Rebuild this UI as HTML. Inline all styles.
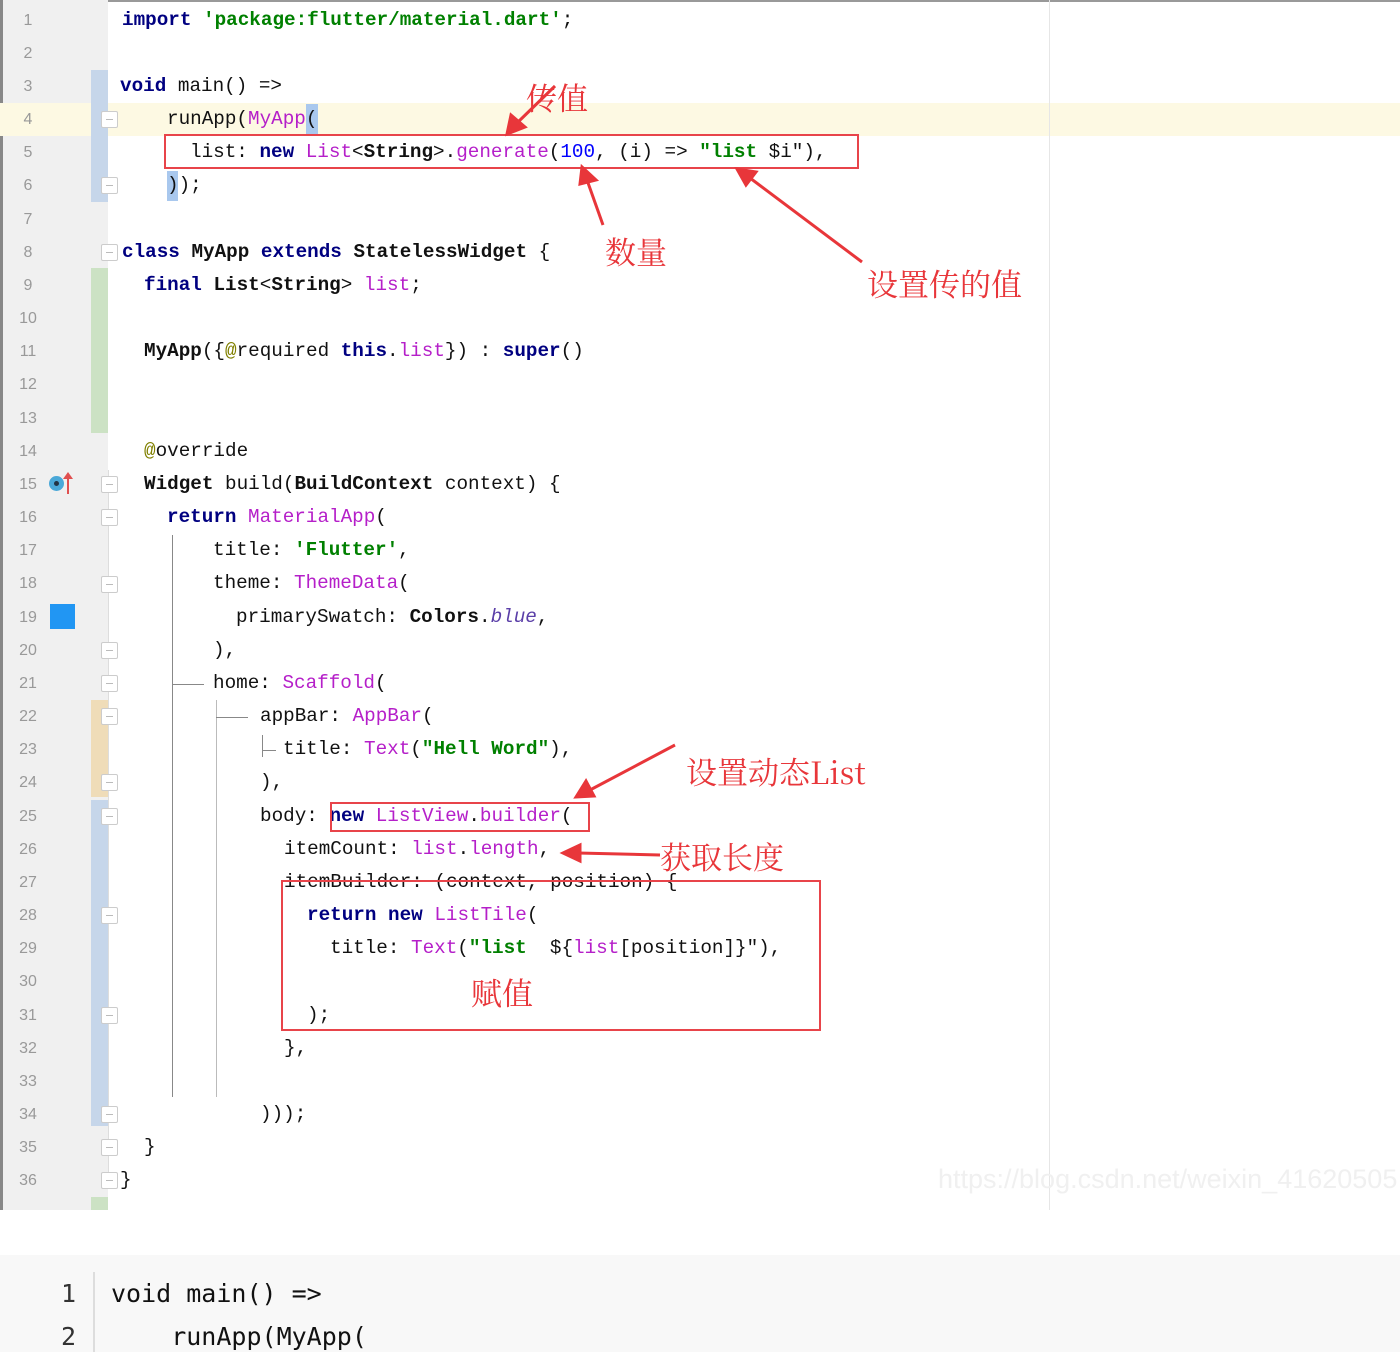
<!DOCTYPE html>
<html><head><meta charset="utf-8"><style>
*{margin:0;padding:0;box-sizing:border-box}
body{width:1400px;height:1352px;background:#fff;position:relative;overflow:hidden;font-family:"Liberation Mono",monospace}
.a{position:absolute}
.ln{position:absolute;left:10px;width:36px;text-align:center;font-family:"Liberation Sans",sans-serif;font-size:16px;color:#999;height:33px;line-height:33px}
.l{position:absolute;font-size:19.3px;height:33px;line-height:33px;white-space:pre;color:#111}
.k{color:#000080;font-weight:bold}
.s{color:#008000;font-weight:bold}
.c{color:#b51fc9}
.n{color:#0000ff}
.b{font-weight:bold}
.i{color:#5b3fa8;font-style:italic}
.r{color:#e8363a;font-family:"Noto Serif CJK SC","Noto Sans CJK SC",serif;font-size:31px;position:absolute;white-space:nowrap}
.box{position:absolute;border:2px solid #e8444a}
.f{position:absolute;left:101px;width:17px;height:17px;border:1px solid #ccc;background:#fff;border-radius:2px}
.f::after{content:"";position:absolute;left:4px;top:7px;width:7px;height:1px;background:#bbb}
</style></head><body>
<div class="a" style="left:0;top:0;width:1400px;height:1210px;border-top:2px solid #999"></div>
<div class="a" style="left:0;top:0;width:108px;height:1210px;background:#f0f0f0;border-left:3px solid #888"></div>
<div class="a" style="left:0;top:103px;width:1400px;height:33px;background:#fdf9e3"></div>
<div class="a" style="left:1049px;top:0;width:1px;height:1210px;background:#e6e6e6"></div>
<div class="a" style="left:91px;top:70px;width:17px;height:132px;background:#c6d6ea"></div>
<div class="a" style="left:91px;top:268px;width:17px;height:165px;background:#cce2c4"></div>
<div class="a" style="left:91px;top:700px;width:17px;height:97px;background:#efdcb8"></div>
<div class="a" style="left:91px;top:800px;width:17px;height:326px;background:#c6d6ea"></div>
<div class="a" style="left:91px;top:1197px;width:17px;height:13px;background:#cce2c4"></div>
<div class="a" style="left:108px;top:470px;width:1px;height:710px;background:#ddd"></div>
<div class="f" style="top:111px"></div><div class="f" style="top:177px"></div><div class="f" style="top:244px"></div>
<div class="f" style="top:476px"></div><div class="f" style="top:509px"></div><div class="f" style="top:576px"></div>
<div class="f" style="top:642px"></div><div class="f" style="top:675px"></div><div class="f" style="top:708px"></div>
<div class="f" style="top:774px"></div><div class="f" style="top:808px"></div><div class="f" style="top:907px"></div>
<div class="f" style="top:1007px"></div><div class="f" style="top:1106px"></div><div class="f" style="top:1139px"></div><div class="f" style="top:1172px"></div>
<div class="a" style="left:49px;top:476px;width:15px;height:15px;border-radius:50%;background:#4aa8d8"></div>
<div class="a" style="left:54px;top:481px;width:5px;height:5px;border-radius:50%;background:#234"></div>
<div class="a" style="left:67px;top:476px;width:2px;height:18px;background:#e05050"></div>
<div class="a" style="left:63px;top:472px;width:0;height:0;border-left:5px solid transparent;border-right:5px solid transparent;border-bottom:7px solid #e05050"></div>
<div class="a" style="left:50px;top:604px;width:25px;height:25px;background:#2196f3"></div>
<div class="ln" style="top:3.5px">1</div><div class="ln" style="top:36.7px">2</div><div class="ln" style="top:69.8px">3</div><div class="ln" style="top:103px">4</div><div class="ln" style="top:136.2px">5</div><div class="ln" style="top:169.3px">6</div><div class="ln" style="top:202.5px">7</div><div class="ln" style="top:235.7px">8</div><div class="ln" style="top:268.8px">9</div><div class="ln" style="top:302px">10</div><div class="ln" style="top:335.2px">11</div><div class="ln" style="top:368.4px">12</div><div class="ln" style="top:401.5px">13</div><div class="ln" style="top:434.7px">14</div><div class="ln" style="top:467.9px">15</div><div class="ln" style="top:501px">16</div><div class="ln" style="top:534.2px">17</div><div class="ln" style="top:567.4px">18</div><div class="ln" style="top:600.5px">19</div><div class="ln" style="top:633.7px">20</div><div class="ln" style="top:666.9px">21</div><div class="ln" style="top:700px">22</div><div class="ln" style="top:733.2px">23</div><div class="ln" style="top:766.4px">24</div><div class="ln" style="top:799.6px">25</div><div class="ln" style="top:832.7px">26</div><div class="ln" style="top:865.9px">27</div><div class="ln" style="top:899px">28</div><div class="ln" style="top:932.2px">29</div><div class="ln" style="top:965.4px">30</div><div class="ln" style="top:998.6px">31</div><div class="ln" style="top:1031.7px">32</div><div class="ln" style="top:1064.9px">33</div><div class="ln" style="top:1098px">34</div><div class="ln" style="top:1131.2px">35</div><div class="ln" style="top:1164.4px">36</div>
<div class="a" style="left:172px;top:535px;width:1px;height:562px;background:#888"></div>
<div class="a" style="left:172px;top:684px;width:32px;height:1px;background:#888"></div>
<div class="a" style="left:216px;top:700px;width:1px;height:397px;background:#bbb"></div>
<div class="a" style="left:216px;top:717px;width:32px;height:1px;background:#888"></div>
<div class="a" style="left:262px;top:735px;width:1px;height:22px;background:#888"></div>
<div class="a" style="left:262px;top:750px;width:14px;height:1px;background:#888"></div>
<div class="a" style="left:306px;top:104px;width:12px;height:30px;background:#a9c8ee"></div>
<div class="a" style="left:167px;top:171px;width:11px;height:30px;background:#a9c8ee"></div>
<div class="l" style="top:3.5px;left:122px"><span class="k">import</span> <span class="s">'package:flutter/material.dart'</span>;</div>
<div class="l" style="top:69.8px;left:120px"><span class="k">void</span> main() =&gt;</div>
<div class="l" style="top:103px;left:167px">runApp(<span class="c">MyApp</span>(</div>
<div class="l" style="top:136.2px;left:190px">list: <span class="k">new</span> <span class="c">List</span>&lt;<span class="b">String</span>&gt;.<span class="c">generate</span>(<span class="n">100</span>, (i) =&gt; <span class="s">"list</span> $i"),</div>
<div class="l" style="top:169.3px;left:167px">));</div>
<div class="l" style="top:235.7px;left:122px"><span class="k">class</span> <span class="b">MyApp</span> <span class="k">extends</span> <span class="b">StatelessWidget</span> {</div>
<div class="l" style="top:268.8px;left:144px"><span class="k">final</span> <span class="b">List</span>&lt;<span class="b">String</span>&gt; <span class="c">list</span>;</div>
<div class="l" style="top:335.2px;left:144px"><span class="b">MyApp</span>({<span style="color:#808000">@</span>required <span class="k">this</span>.<span class="c">list</span>}) : <span class="k">super</span>()</div>
<div class="l" style="top:434.7px;left:144px"><span style="color:#808000">@</span>override</div>
<div class="l" style="top:467.9px;left:144px"><span class="b">Widget</span> build(<span class="b">BuildContext</span> context) {</div>
<div class="l" style="top:501px;left:167px"><span class="k">return</span> <span class="c">MaterialApp</span>(</div>
<div class="l" style="top:534.2px;left:213px">title: <span class="s">'Flutter'</span>,</div>
<div class="l" style="top:567.4px;left:213px">theme: <span class="c">ThemeData</span>(</div>
<div class="l" style="top:600.5px;left:236px">primarySwatch: <span class="b">Colors</span>.<span class="i">blue</span>,</div>
<div class="l" style="top:633.7px;left:213px">),</div>
<div class="l" style="top:666.9px;left:213px">home: <span class="c">Scaffold</span>(</div>
<div class="l" style="top:700px;left:260px">appBar: <span class="c">AppBar</span>(</div>
<div class="l" style="top:733.2px;left:283px">title: <span class="c">Text</span>(<span class="s">"Hell Word"</span>),</div>
<div class="l" style="top:766.4px;left:260px">),</div>
<div class="l" style="top:799.6px;left:260px">body: <span class="k">new</span> <span class="c">ListView</span>.<span class="c">builder</span>(</div>
<div class="l" style="top:832.7px;left:284px">itemCount: <span class="c">list</span>.<span class="c">length</span>,</div>
<div class="l" style="top:865.9px;left:284px">itemBuilder: (context, position) {</div>
<div class="l" style="top:899px;left:307px"><span class="k">return</span> <span class="k">new</span> <span class="c">ListTile</span>(</div>
<div class="l" style="top:932.2px;left:330px">title: <span class="c">Text</span>(<span class="s">"list</span>  ${<span class="c">list</span>[position]}"),</div>
<div class="l" style="top:998.6px;left:307px">);</div>
<div class="l" style="top:1031.7px;left:284px">},</div>
<div class="l" style="top:1098px;left:260px">)));</div>
<div class="l" style="top:1131.2px;left:144px">}</div>
<div class="l" style="top:1164.4px;left:120px">}</div>
<div class="a" style="left:938px;top:1164px;font-family:'Liberation Sans',sans-serif;font-size:27px;color:#f0f0f0;white-space:nowrap">https://blog.csdn.net/weixin_41620505</div>
<div class="box" style="left:164px;top:134px;width:695px;height:35px"></div>
<div class="box" style="left:330px;top:802px;width:260px;height:30px"></div>
<div class="box" style="left:281px;top:880px;width:540px;height:151px"></div>
<div class="r" style="left:526px;top:74px">传值</div>
<div class="r" style="left:605px;top:228px">数量</div>
<div class="r" style="left:867px;top:260px">设置传的值</div>
<div class="r" style="left:686px;top:748px">设置动态List</div>
<div class="r" style="left:660px;top:833px">获取长度</div>
<div class="r" style="left:471px;top:969px">赋值</div>
<svg class="a" style="left:0;top:0" width="1400" height="1210">
<g stroke="#e8363a" stroke-width="3" fill="#e8363a">
<line x1="555" y1="86" x2="516" y2="124"/><polygon points="507,134 511,115 525,127"/>
<line x1="603" y1="225" x2="587" y2="180"/><polygon points="582,167 580,184 596,180"/>
<line x1="862" y1="262" x2="750" y2="178"/><polygon points="737,169 746,185 756,172"/>
<line x1="675" y1="745" x2="590" y2="790"/><polygon points="576,797 586,781 594,796"/>
<line x1="660" y1="855" x2="578" y2="853"/><polygon points="563,853 580,845 580,861"/>
</g></svg>
<div class="a" style="left:0;top:1255px;width:1400px;height:97px;background:#f8f8f8"></div>
<div class="a" style="left:93px;top:1272px;width:2px;height:80px;background:#ddd"></div>
<div class="a" style="left:46px;top:1279px;width:30px;text-align:right;font-family:'DejaVu Sans Mono',monospace;font-size:25px;color:#333">1</div>
<div class="a" style="left:46px;top:1322px;width:30px;text-align:right;font-family:'DejaVu Sans Mono',monospace;font-size:25px;color:#333">2</div>
<div class="a" style="left:111px;top:1279px;font-family:'DejaVu Sans Mono',monospace;font-size:25px;color:#111;white-space:pre">void main() =&gt;</div>
<div class="a" style="left:111px;top:1322px;font-family:'DejaVu Sans Mono',monospace;font-size:25px;color:#111;white-space:pre">    runApp(MyApp(</div>
</body></html>
